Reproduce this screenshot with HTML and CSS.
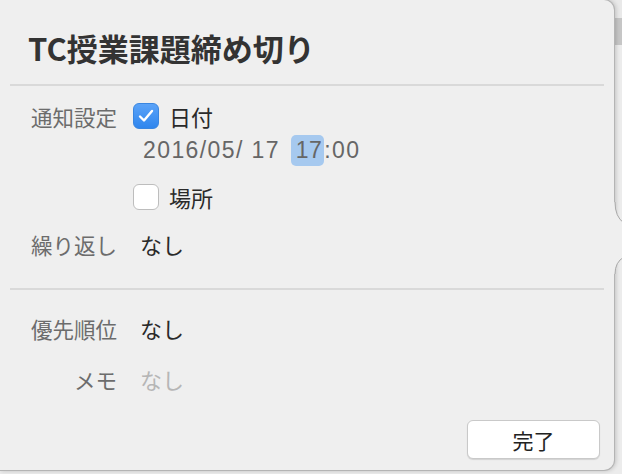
FILE: index.html
```html
<!DOCTYPE html>
<html>
<head>
    <title>TC授業課題締め切り</title>
    <link rel="stylesheet" href="styles.css">
</head>
<body>
    <div class="popover">
        <h2 class="title">TC授業課題締め切り</h2>
        <hr class="divider">

        <div class="section first">
            <div class="row">
                <span class="label">通知設定</span>
                <div class="value">
                    <span class="check on">
                        <svg width="16" height="14" viewBox="0 0 16 14"><path d="M2 7.5 L6 11.5 L14 2" fill="none" stroke="#fff" stroke-width="2.4" stroke-linecap="round" stroke-linejoin="round"/></svg>
                    </span>
                    <span class="text">日付</span>
                </div>
            </div>
            <div class="row">
                <span class="label"></span>
                <div class="value date">2016/05/ 17 <span class="sel">17</span>:00</div>
            </div>
            <div class="row gap">
                <span class="label"></span>
                <div class="value">
                    <span class="check"></span>
                    <span class="text">場所</span>
                </div>
            </div>
            <div class="row gap">
                <span class="label">繰り返し</span>
                <div class="value"><span class="text plain">なし</span></div>
            </div>
        </div>

        <hr class="divider">

        <div class="section second">
            <div class="row">
                <span class="label">優先順位</span>
                <div class="value"><span class="text plain">なし</span></div>
            </div>
            <div class="row memo">
                <span class="label">メモ</span>
                <div class="value"><span class="text plain muted">なし</span></div>
            </div>
        </div>

        <div class="actions">
            <button class="done">完了</button>
        </div>

        <!-- arrow pointing to the list on the right -->
        <svg class="arrow" width="10" height="72" viewBox="0 0 10 72">
            <path d="M1 0 Q1 15 10 21 L10 55 Q1 60 1 72 L0 72 L0 0 Z" fill="#efefef"/>
            <path d="M1 0 Q1 15 10 21 M10 55 Q1 60 1 72" fill="none" stroke="#a9a9a9" stroke-width="1"/>
        </svg>
    </div>
</body>
</html>
```

FILE: styles.css
```css
body {
    margin: 0;
    height: 474px;
    overflow: hidden;
    background: linear-gradient(to bottom, #e9e9e9 0, #e9e9e9 18px, #c6c6c6 18px, #c6c6c6 45px, #ececec 45px);
    font-family: "Noto Sans CJK JP", "Noto Sans", sans-serif;
    color: #333;
}

.popover {
    position: relative;
    box-sizing: border-box;
    width: 615px;
    height: 472px;
    margin-top: -1px;
    background-color: #efefef;
    border: 1px solid #b4b4b4;
    border-left: none;
    border-radius: 0 11px 11px 0;
    box-shadow: 1px 0 4px rgba(0,0,0,0.18);
}

.title {
    margin: 0;
    padding: 32px 0 0 28px;
    height: 52px;
    font-size: 31px;
    line-height: 32px;
    font-weight: 700;
    color: #333;
}

.divider {
    margin: 0 10px;
    border: none;
    height: 2px;
    background-color: #d9d9d9;
}

.section.first {
    padding-top: 13px;
    height: 189px;
}

.section.second {
    padding-top: 21px;
    height: 109px;
}

.row {
    display: flex;
    align-items: center;
    height: 34px;
}

.row.gap {
    margin-top: 13px;
}

.row.memo {
    margin-top: 17px;
}

.label {
    width: 117px;
    text-align: right;
    font-size: 21.5px;
    color: #6c6c6c;
    flex-shrink: 0;
}

.value {
    display: flex;
    align-items: center;
    margin-left: 16px;
}

.text {
    margin-left: 10px;
    font-size: 22px;
    color: #2a2a2a;
}

.text.plain {
    margin-left: 7px;
}

.text.muted {
    color: #b6b6b6;
}

.check {
    box-sizing: border-box;
    display: flex;
    align-items: center;
    justify-content: center;
    width: 26px;
    height: 26px;
    border-radius: 6px;
    background-color: #fff;
    border: 1px solid #bdbdbd;
}

.check.on {
    background: linear-gradient(to bottom, #5ba3f8, #2f86ee);
    border-color: #3a86e0;
}

.date {
    display: block;
    margin-left: 26px;
    font-family: "Liberation Sans", Arial, sans-serif;
    font-size: 23px;
    letter-spacing: 1.4px;
    line-height: 31px;
    color: #666;
}

.sel {
    display: inline-block;
    margin-left: 3px;
    padding: 0 2px 0 5px;
    letter-spacing: 0.5px;
    border-radius: 5px;
    background-color: #a6c9ef;
}

.actions {
    display: flex;
    justify-content: flex-end;
    padding-right: 14px;
}

.done {
    width: 133px;
    height: 39px;
    background-color: #fff;
    border: 1px solid #c9c9c9;
    border-radius: 6px;
    box-shadow: 0 1px 1px rgba(0,0,0,0.12);
    font-family: "Noto Sans CJK JP", sans-serif;
    font-size: 21px;
    color: #222;
}

.arrow {
    position: absolute;
    right: -10px;
    top: 202px;
}
```
